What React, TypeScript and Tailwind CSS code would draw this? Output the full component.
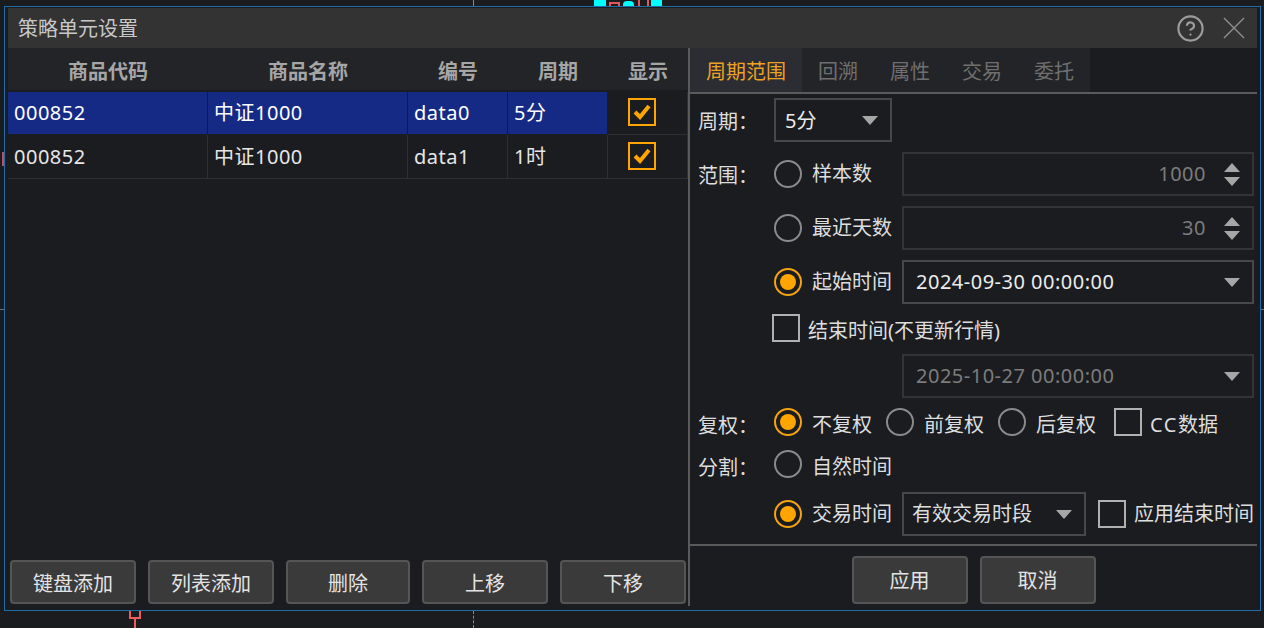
import React from 'react';
import { CircleHelp } from 'lucide-react';

const FONT = 'font-["Noto_Sans","Noto_Sans_CJK_SC",sans-serif]';

const Arrow = ({ up = false, className = '' }: { up?: boolean; className?: string }) => (
  <svg width="16" height="9" viewBox="0 0 16 9" className={className}>
    <polygon points={up ? '8,0 16,9 0,9' : '0,0 16,0 8,9'} fill="#a6a6a6" />
  </svg>
);

const Radio = ({ on = false }: { on?: boolean }) => (
  <span
    className={`flex h-[28px] w-[28px] shrink-0 items-center justify-center rounded-full border-2 ${
      on ? 'border-[#f5a40f]' : 'border-[#8a8a8a]'
    }`}
  >
    {on && <span className="h-[16px] w-[16px] rounded-full bg-[#ffa500]" />}
  </span>
);

const RadioLabel = ({ on, label, low }: { on?: boolean; label: string; low?: boolean }) => (
  <div className="flex items-center gap-[10px]">
    <Radio on={on} />
    <span className={`whitespace-nowrap ${low ? 'pt-[6px]' : ''}`}>{label}</span>
  </div>
);

const CheckBox = ({ label, low }: { label: React.ReactNode; low?: boolean }) => (
  <div className="flex items-center gap-[8px]">
    <span className="h-[28px] w-[28px] shrink-0 border-2 border-[#b0b0b0]" />
    <span className={`whitespace-nowrap ${low ? 'pt-[6px]' : ''}`}>{label}</span>
  </div>
);

const Checked = () => (
  <span className="flex h-[28px] w-[28px] items-center justify-center border-2 border-[#ffa500]">
    <svg width="18" height="16" viewBox="0 0 18 16">
      <path d="M2 8 L7 13 L16 2" fill="none" stroke="#ffa500" strokeWidth="4" />
    </svg>
  </span>
);

const Button = ({ label, className }: { label: string; className: string }) => (
  <button className={`flex items-center justify-center rounded-[4px] border-2 border-[#555555] bg-[#3a3a3a] text-[#e4e4e4] ${className}`}>
    {label}
  </button>
);

const SpinBox = ({ value }: { value: string }) => (
  <div className="flex h-[44px] w-[352px] items-center justify-end border-2 border-[#333437] pr-[12px] text-[#7c7c7c]">
    <span className="mr-[18px] tracking-[0.5px]">{value}</span>
    <div className="flex flex-col gap-[5px]">
      <Arrow up />
      <Arrow />
    </div>
  </div>
);

const DateBox = ({ value, off = false }: { value: string; off?: boolean }) => (
  <div
    className={`flex h-[44px] w-[352px] items-center justify-between border-2 pl-[12px] pr-[12px] ${
      off ? 'border-[#333437] text-[#7c7c7c]' : 'border-[#47484b] text-[#ececec]'
    }`}
  >
    <span className="tracking-[0.5px]">{value}</span>
    <Arrow />
  </div>
);

const columns = ['w-[200px]', 'w-[200px]', 'w-[100px]', 'w-[100px]', 'w-[80px]'];

const rows = [
  { code: '000852', name: '中证1000', id: 'data0', period: '5分', active: true, height: 'h-[43px]', check: 'pt-[6px]' },
  { code: '000852', name: '中证1000', id: 'data1', period: '1时', active: false, height: 'h-[44px]', check: 'pt-[7px]' },
];

const Table = () => (
  <div className="flex-1">
    <div className="flex h-[42px] bg-[#232427] pt-[5px] font-bold text-[#a6a6a6]">
      {['商品代码', '商品名称', '编号', '周期', '显示'].map((h, i) => (
        <div key={h} className={`flex items-center justify-center ${columns[i]}`}>
          {h}
        </div>
      ))}
    </div>
    <div className="mt-[2px]">
      {rows.map((r) => {
        const cell = `flex items-center border-r border-b pl-[6px] tracking-[0.5px] ${r.height} ${
          r.active ? 'border-[#1b1c20] bg-[#152a85] text-white' : 'border-[#2e2f33] text-[#e6e6e6]'
        }`;
        return (
          <div key={r.id} className="flex">
            <div className={`${cell} w-[200px]`}>{r.code}</div>
            <div className={`${cell} w-[200px]`}>{r.name}</div>
            <div className={`${cell} w-[100px]`}>{r.id}</div>
            <div className={`${cell} w-[100px]`}>{r.period}</div>
            <div className={`flex w-[80px] justify-start border-r border-b border-[#2e2f33] pl-[20px] ${r.height} ${r.check}`}>
              <Checked />
            </div>
          </div>
        );
      })}
    </div>
  </div>
);

const Form = () => (
  <div className="h-[450px] pl-[8px] text-[#dedede]">
    <div className="mt-[4px] flex h-[44px] items-center">
      <span className="w-[76px] pt-[4px]">周期：</span>
      <div className="flex h-[44px] w-[118px] items-center justify-between border-2 border-[#47484b] pl-[9px] pr-[12px] text-[#ececec]">
        <span className="pt-[2px]">5分</span>
        <Arrow />
      </div>
    </div>
    <div className="mt-[10px] flex h-[44px] items-center">
      <span className="w-[76px] pt-[4px]">范围：</span>
      <div className="w-[128px]"><RadioLabel label="样本数" /></div>
      <SpinBox value="1000" />
    </div>
    <div className="mt-[10px] flex h-[44px] items-center pl-[76px]">
      <div className="w-[128px]"><RadioLabel label="最近天数" /></div>
      <SpinBox value="30" />
    </div>
    <div className="mt-[10px] flex h-[44px] items-center pl-[76px]">
      <div className="w-[128px]"><RadioLabel on label="起始时间" /></div>
      <DateBox value="2024-09-30 00:00:00" />
    </div>
    <div className="mt-[10px] flex h-[28px] items-center pl-[74px]">
      <CheckBox low label="结束时间(不更新行情)" />
    </div>
    <div className="mt-[12px] flex h-[44px] items-center pl-[204px]">
      <DateBox off value="2025-10-27 00:00:00" />
    </div>
    <div className="mt-[10px] flex h-[28px] items-center">
      <span className="w-[76px] pt-[8px]">复权：</span>
      <div className="w-[112px]"><RadioLabel low on label="不复权" /></div>
      <div className="w-[112px]"><RadioLabel low label="前复权" /></div>
      <div className="w-[116px]"><RadioLabel low label="后复权" /></div>
      <CheckBox low label={<><span className="tracking-[1.5px]">CC</span>数据</>} />
    </div>
    <div className="mt-[14px] flex h-[28px] items-center">
      <span className="w-[76px] pt-[8px]">分割：</span>
      <RadioLabel low label="自然时间" />
    </div>
    <div className="mt-[14px] flex h-[44px] items-center pl-[76px]">
      <div className="w-[128px]"><RadioLabel on label="交易时间" /></div>
      <div className="flex h-[44px] w-[184px] items-center justify-between border-2 border-[#47484b] pl-[8px] pr-[12px]">
        <span>有效交易时段</span>
        <Arrow />
      </div>
      <div className="ml-[12px]"><CheckBox label="应用结束时间" /></div>
    </div>
  </div>
);

// bits of the chart that stick out behind the dialog
const ChartBehind = () => (
  <>
    <div className="absolute left-[473px] top-0 h-[6px] w-[1px] bg-[#8a8a8a]" />
    <div className="absolute left-[594px] top-0 h-[6px] w-[12px] bg-[#00ffff]" />
    <div className="absolute left-[609px] top-[2px] h-[6px] w-[11px] border-2 border-[#e0585c]" />
    <div className="absolute left-[623px] top-[1px] h-[5px] w-[11px] rounded-t bg-[#00ffff]" />
    <div className="absolute left-[638px] top-0 h-[6px] w-[11px] border-x-2 border-[#e0585c]" />
    <div className="absolute left-[651px] top-0 h-[6px] w-[11px] bg-[#00ffff]" />
    <div className="absolute left-[2px] top-[152px] h-[14px] w-[3px] bg-[#b9505f]" />
    <div className="absolute left-0 top-[309px] h-[1px] w-[5px] bg-[#6f6f6f]" />
    <div className="absolute left-[1261px] top-[309px] h-[1px] w-[3px] bg-[#6f6f6f]" />
    <div className="absolute left-[473px] top-[611px] h-[17px] border-l border-dashed border-[#8a8a8a]" />
    <div className="absolute left-[129px] top-[611px] h-[8px] w-[12px] border-x-2 border-b-2 border-[#f25c5c]" />
    <div className="absolute left-[134px] top-[619px] h-[9px] w-[2px] bg-[#f25c5c]" />
  </>
);

const App = () => {
  return (
    <div className={`relative h-[628px] w-[1264px] overflow-hidden bg-[#1b1c20] pl-[4px] pt-[6px] text-[20px] leading-none ${FONT}`}>
      <ChartBehind />
      <div className="relative h-[605px] w-[1257px] border border-[#1f6eaa] bg-[#1b1c20] px-[3px] pt-[1px]">
        <div className="flex h-[40px] items-center justify-between bg-[#333333] pl-[10px] pr-[12px] text-[#c8c8c8]">
          <span className="pt-[2px]">策略单元设置</span>
          <div className="flex items-center gap-[18px]">
            <CircleHelp size={29} strokeWidth={1.8} className="text-[#9c9c9c]" />
            <svg width="22" height="22" viewBox="0 0 22 22">
              <path d="M1 1 L21 21 M21 1 L1 21" stroke="#8e8e8e" strokeWidth="1.4" />
            </svg>
          </div>
        </div>
        <div className="flex h-[558px]">
          <div className="flex w-[680px] shrink-0 flex-col pb-[2px]">
            <Table />
            <div className="flex pl-[2px] text-[20px]">
              <Button label="键盘添加" className="h-[44px] w-[126px] pt-[4px]" />
              <Button label="列表添加" className="ml-[12px] h-[44px] w-[126px] pt-[4px]" />
              <Button label="删除" className="ml-[12px] h-[44px] w-[124px] pt-[4px]" />
              <Button label="上移" className="ml-[12px] h-[44px] w-[126px] pt-[4px]" />
              <Button label="下移" className="ml-[12px] h-[44px] w-[126px] pt-[4px]" />
            </div>
          </div>
          <div className="w-[2px] shrink-0 bg-[#5a5a5a]" />
          <div className="flex w-[568px] flex-col">
            <div className="flex h-[46px] border-b-2 border-[#5a5a5a]">
              <div className="flex w-[112px] items-center justify-center bg-[#2b2d33] pt-[4px] text-[#eda224]">周期范围</div>
              {['回溯', '属性', '交易', '委托'].map((t) => (
                <div key={t} className="flex w-[72px] items-center justify-center bg-[#232427] pt-[4px] text-[#6f6f6f]">
                  {t}
                </div>
              ))}
            </div>
            <Form />
            <div className="h-[2px] bg-[#5a5a5a]" />
            <div className="flex justify-center gap-[12px] pt-[10px]">
              <Button label="应用" className="h-[48px] w-[116px] pt-[2px]" />
              <Button label="取消" className="h-[48px] w-[116px] pt-[2px]" />
            </div>
          </div>
        </div>
      </div>
    </div>
  );
};

export default App;
